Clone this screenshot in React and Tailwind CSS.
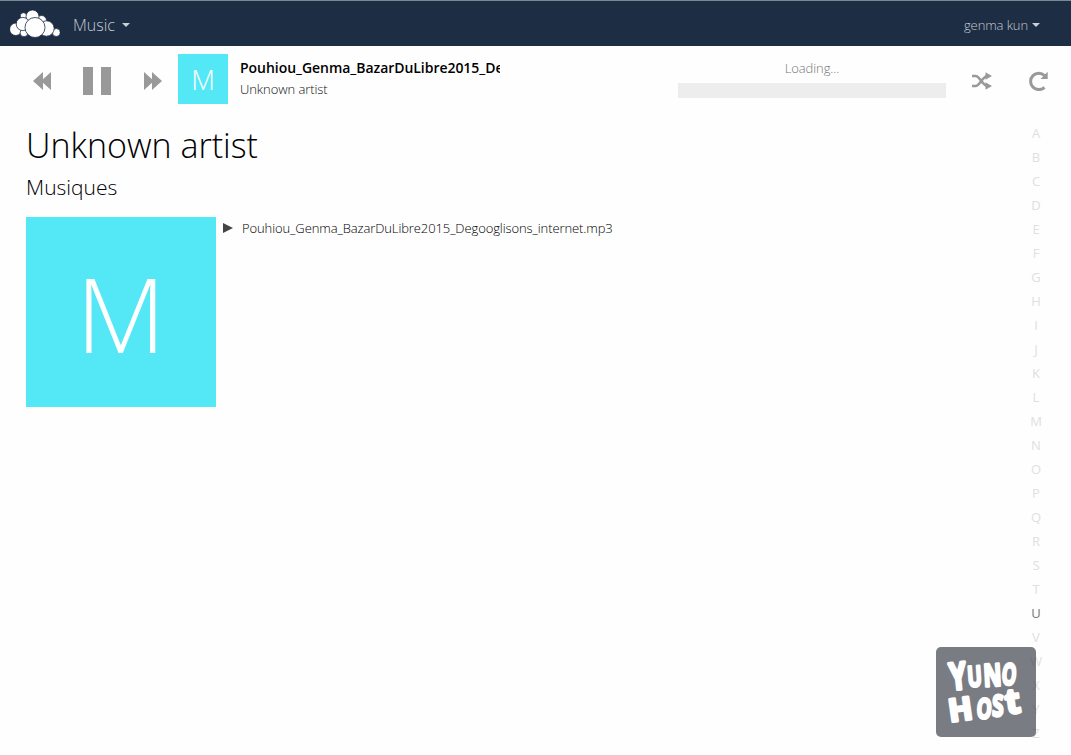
import React from "react";

const LETTERS = "ABCDEFGHIJKLMNOPQRSTUVWXYZ".split("");

function CloudLogo() {
  const circles = [
    [13.5, 6, 3.3], [31.5, 10.5, 5], [22.5, 6.5, 6.5],
    [5.8, 19.3, 6.2], [14, 22.8, 3.9], [12.8, 14, 6.6],
    [46.3, 22.5, 4], [36.5, 18.5, 7.7], [25, 17.5, 10],
  ];
  return (
    <svg className="h-7 w-[50px]" viewBox="0 0 50 28">
      {circles.map(([x, y, r]) => (
        <circle key={`${x}-${y}`} cx={x} cy={y} r={r} fill="#fff" stroke="#1d2d44" strokeWidth="0.8" />
      ))}
    </svg>
  );
}

function Caret() {
  return (
    <svg className="h-1 w-2" viewBox="0 0 8 4">
      <path d="M0 0h8L4 4z" fill="#c8d0d8" />
    </svg>
  );
}

function Header() {
  return (
    <header className="flex h-[46px] items-center border-t border-[#7b8794] bg-[#1d2d44] pr-[31px] pl-[10px] text-[#c3cad3]">
      <CloudLogo />
      <div className="ml-[13px] flex items-center gap-[7px] pt-[3px]">
        <span className="text-base leading-6">Music</span>
        <Caret />
      </div>
      <div className="ml-auto flex items-center gap-1 pt-[2px]">
        <span className="text-[13px] leading-5 tracking-[-0.1px]">genma kun</span>
        <Caret />
      </div>
    </header>
  );
}

function Player() {
  return (
    <section className="flex h-[66px] pt-2 text-[13px]">
      <div className="flex h-[54px] w-[178px] items-center pl-[33px]">
        <svg className="h-[18px] w-[18px]" viewBox="0 0 18 18" fill="#999">
          <path d="M0 9l10-9v18zM8 9l10-9v18z" />
        </svg>
        <svg className="ml-8 h-7 w-7" viewBox="0 0 28 28" fill="#999">
          <path d="M0 0h10v28H0zM18 0h10v28H18z" />
        </svg>
        <svg className="ml-[33px] h-[18px] w-[18px]" viewBox="0 0 18 18" fill="#999">
          <path d="M18 9L8 0v18zM10 9L0 0v18z" />
        </svg>
      </div>
      <div className="flex size-[50px] items-center justify-center bg-[#54e8f6] pt-[2px] text-[27.5px] text-white">M</div>
      <div className="ml-3 w-[260px] overflow-hidden pt-1 whitespace-nowrap">
        <div className="text-[14px] font-semibold leading-5 tracking-[-0.04px] text-black">Pouhiou_Genma_BazarDuLibre2015_Degooglisons_internet.mp3</div>
        <div className="pt-px leading-5 tracking-[-0.08px] text-[#111]">Unknown artist</div>
      </div>
      <div className="ml-[178px] w-[268px] pt-1 text-center">
        <div className="leading-5 tracking-[-0.1px] text-[#777]">Loading...</div>
        <div className="mt-[5px] h-[15px] bg-[#ededed]" />
      </div>
      <div className="ml-[26px] flex h-[54px] items-center">
        <svg className="h-[18px] w-5" viewBox="0 0 20 18" fill="none" stroke="#999" strokeWidth="2.6">
          <path d="M0 4h3.500c4.500 0 7 10 12 10M0 14h3.500c4.500 0 7-10 12-10" />
          <path d="M13.500 .3L20 4l-6.500 3.700zM13.500 10.300L20 14l-6.500 3.700z" fill="#999" stroke="none" />
        </svg>
        <svg className="ml-[37px] h-5 w-5" viewBox="0 0 20 20" fill="none">
          <path d="M15.500 16.300A8.200 8.200 0 1 1 15.500 4.500" stroke="#999" strokeWidth="3" />
          <path d="M18.700 .8V8h-7.200z" fill="#999" />
        </svg>
      </div>
    </section>
  );
}

function YunoHostBadge() {
  const glyphs = [
    ["Y", "translate(15 43) rotate(-6) scale(.95 1.320)"],
    ["U", "translate(32 40) rotate(-4) scale(.69 1.020)"],
    ["N", "translate(48 39.500) rotate(-3) scale(.79 1.100)"],
    ["O", "translate(65 37) rotate(5) scale(.66 1.050)"],
    ["H", "translate(14 75) rotate(-8) scale(1.120 1.120)"],
    ["O", "translate(40 71) rotate(4) scale(.68 1)"],
    ["S", "translate(56 69) rotate(1) scale(.74 1.050)"],
    ["t", "translate(71 67) rotate(-8) scale(1.200 1.220)"],
  ];
  return (
    <div className="absolute top-[647px] left-[936px] h-[90px] w-[100px] rounded-[5px] bg-[#41454f]/70">
      <svg
        className="h-full w-full font-['Open_Sans',sans-serif] text-[28px] font-bold"
        viewBox="0 0 100 90"
        fill="#fff"
        stroke="#fff"
        strokeWidth="2.6"
        strokeLinejoin="round"
      >
        {glyphs.map(([letter, transform]) => (
          <text key={transform} transform={transform}>{letter}</text>
        ))}
      </svg>
    </div>
  );
}

export default function App() {
  return (
    <div className="relative h-[755px] w-[1071px] overflow-hidden bg-[#fefefe] font-['Open_Sans',sans-serif] font-light">
      <Header />
      <Player />
      <div className="flex">
        <main className="flex-1 pt-2 pl-[26px] text-black">
          <h1 className="h-[52px] text-[34px] leading-[51px]">Unknown artist</h1>
          <h2 className="h-[30px] text-[21px] leading-[30px]">Musiques</h2>
          <div className="mt-[15px] flex">
            <div className="flex size-[190px] items-center justify-center bg-[#54e8f6] pt-[2px] text-[104px] text-white">M</div>
            <div className="flex h-[22px] items-center text-[13px]">
              <svg className="ml-[7px] h-[10px] w-[10px]" viewBox="0 0 10 10">
                <path d="M0 0l10 5-10 5z" fill="#444" />
              </svg>
              <span className="ml-[9px] pt-[2px] tracking-[-0.1px]">Pouhiou_Genma_BazarDuLibre2015_Degooglisons_internet.mp3</span>
            </div>
          </div>
        </main>
        <nav className="mr-[20px] flex w-[30px] flex-col pt-[9px] text-center text-[13px] leading-6">
          {LETTERS.map((letter) => (
            <span key={letter} className={letter === "U" ? "font-normal text-[#777]" : "font-normal text-[#e0e0e0]"}>
              {letter}
            </span>
          ))}
        </nav>
      </div>
      <YunoHostBadge />
    </div>
  );
}
